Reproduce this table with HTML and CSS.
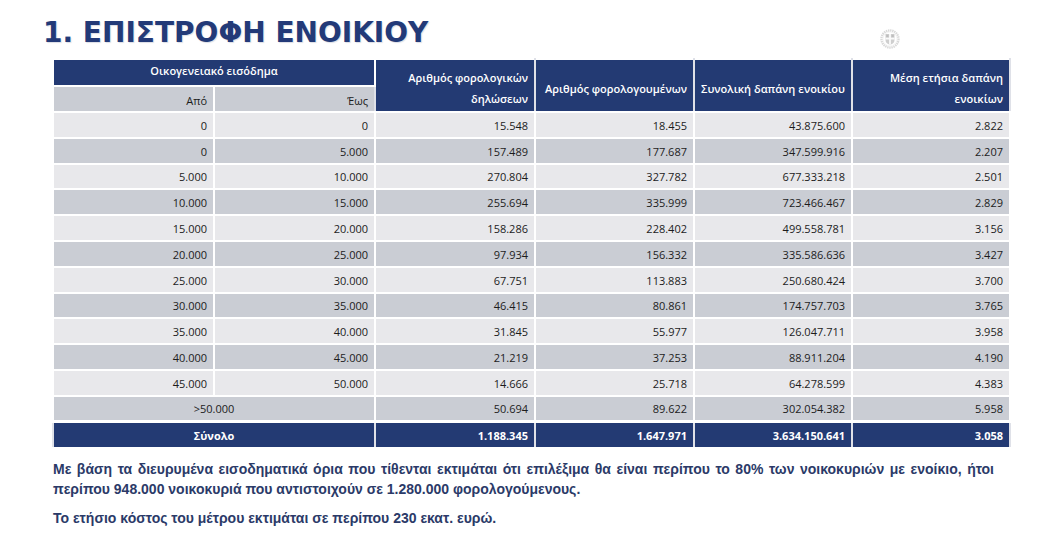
FILE: index.html
```html
<!DOCTYPE html>
<html lang="el">
<head>
<meta charset="utf-8">
<title>Επιστροφή ενοικίου</title>
<link rel="stylesheet" href="styles.css">
</head>
<body>
<div class="page">
  <div class="top">
    <h1 class="title">1. ΕΠΙΣΤΡΟΦΗ ΕΝΟΙΚΙΟΥ</h1>
    <svg class="emblem" viewBox="0 0 20 20" aria-hidden="true">
      <circle cx="10" cy="10" r="8.5" fill="none" stroke="#d9d9d9" stroke-width="2.4" stroke-dasharray="1.4 0.7"/>
      <circle cx="10" cy="10" r="7" fill="none" stroke="#ececec" stroke-width="0.6"/>
      <path d="M5.5 5 H14.5 V11 Q14.5 14.7 10 15.8 Q5.5 14.7 5.5 11 Z" fill="#cfcfcf"/>
      <rect x="9.1" y="5" width="1.8" height="10.6" fill="#fafafa"/>
      <rect x="5.5" y="8.7" width="9" height="1.8" fill="#fafafa"/>
      <rect x="6.3" y="5.8" width="2.1" height="2.2" fill="#bdbdbd"/>
      <rect x="11.6" y="5.8" width="2.1" height="2.2" fill="#bdbdbd"/>
    </svg>
  </div>

  <table class="data">
    <colgroup>
      <col class="c1"><col class="c2"><col class="c3"><col class="c4"><col class="c5"><col class="c6">
    </colgroup>
    <thead>
      <tr class="h1">
        <th colspan="2" class="group">Οικογενειακό εισόδημα</th>
        <th rowspan="2" class="hcol">Αριθμός φορολογικών<br>δηλώσεων</th>
        <th rowspan="2" class="hcol">Αριθμός φορολογουμένων</th>
        <th rowspan="2" class="hcol">Συνολική δαπάνη ενοικίου</th>
        <th rowspan="2" class="hcol">Μέση ετήσια δαπάνη<br>ενοικίων</th>
      </tr>
      <tr class="h2">
        <th class="sub">Από</th>
        <th class="sub">Έως</th>
      </tr>
    </thead>
    <tbody>
      <tr class="light"><td>0</td><td>0</td><td>15.548</td><td>18.455</td><td>43.875.600</td><td>2.822</td></tr>
      <tr class="dark"><td>0</td><td>5.000</td><td>157.489</td><td>177.687</td><td>347.599.916</td><td>2.207</td></tr>
      <tr class="light"><td>5.000</td><td>10.000</td><td>270.804</td><td>327.782</td><td>677.333.218</td><td>2.501</td></tr>
      <tr class="dark"><td>10.000</td><td>15.000</td><td>255.694</td><td>335.999</td><td>723.466.467</td><td>2.829</td></tr>
      <tr class="light"><td>15.000</td><td>20.000</td><td>158.286</td><td>228.402</td><td>499.558.781</td><td>3.156</td></tr>
      <tr class="dark"><td>20.000</td><td>25.000</td><td>97.934</td><td>156.332</td><td>335.586.636</td><td>3.427</td></tr>
      <tr class="light"><td>25.000</td><td>30.000</td><td>67.751</td><td>113.883</td><td>250.680.424</td><td>3.700</td></tr>
      <tr class="dark"><td>30.000</td><td>35.000</td><td>46.415</td><td>80.861</td><td>174.757.703</td><td>3.765</td></tr>
      <tr class="light"><td>35.000</td><td>40.000</td><td>31.845</td><td>55.977</td><td>126.047.711</td><td>3.958</td></tr>
      <tr class="dark"><td>40.000</td><td>45.000</td><td>21.219</td><td>37.253</td><td>88.911.204</td><td>4.190</td></tr>
      <tr class="light"><td>45.000</td><td>50.000</td><td>14.666</td><td>25.718</td><td>64.278.599</td><td>4.383</td></tr>
      <tr class="dark"><td colspan="2" class="center">&gt;50.000</td><td>50.694</td><td>89.622</td><td>302.054.382</td><td>5.958</td></tr>
    </tbody>
    <tfoot>
      <tr class="total"><td colspan="2" class="center">Σύνολο</td><td>1.188.345</td><td>1.647.971</td><td>3.634.150.641</td><td>3.058</td></tr>
    </tfoot>
  </table>

  <div class="notes">
    <p class="note">Με βάση τα διευρυμένα εισοδηματικά όρια που τίθενται εκτιμάται ότι επιλέξιμα θα είναι περίπου το 80% των νοικοκυριών με ενοίκιο, ήτοι περίπου 948.000 νοικοκυριά που αντιστοιχούν σε 1.280.000 φορολογούμενους.</p>
    <p class="note">Το ετήσιο κόστος του μέτρου εκτιμάται σε περίπου 230 εκατ. ευρώ.</p>
  </div>
</div>
</body>
</html>
```

FILE: styles.css
```css
html, body {
  margin: 0;
  padding: 0;
  background: #ffffff;
}

body {
  font-family: "Open Sans", "Noto Sans", sans-serif;
  color: #1c1c1c;
}

.page {
  width: 1050px;
  padding-top: 17px;
}

.top {
  display: flex;
  align-items: flex-start;
  width: 1009px;
}

.title {
  margin: 0 0 0 43px;
  font-family: "DejaVu Sans", "Liberation Sans", sans-serif;
  font-weight: bold;
  font-size: 28px;
  line-height: 32px;
  letter-spacing: 0;
  color: #233a78;
  text-shadow: 1px 1px 1px rgba(90, 100, 130, 0.22);
}

.emblem {
  display: block;
  width: 20px;
  height: 20px;
  margin-left: auto;
  margin-right: 109px;
  margin-top: 12px;
}

.data {
  margin: 9px 0 0 52px;
  width: 957px;
  table-layout: fixed;
  border-collapse: collapse;
  font-size: 11px;
}

.c1, .c2 { width: 161px; }
.c3 { width: 160px; }
.c4 { width: 159px; }
.c5, .c6 { width: 158px; }

.data th,
.data td {
  border: 2px solid #ffffff;
  padding: 0 6px 0 4px;
  text-align: right;
  white-space: nowrap;
  overflow: hidden;
}

.data .center,
.data .group {
  text-align: center;
  padding-left: 0;
  padding-right: 0;
}

.h1 { height: 26.5px; }
.h2 { height: 26.5px; }

.data .group {
  background: #233a73;
  color: #ffffff;
  font-weight: 600;
  vertical-align: middle;
  padding-bottom: 4px;
}

.data .hcol {
  background: #233a73;
  color: #ffffff;
  font-weight: 600;
  line-height: 21px;
  vertical-align: middle;
  padding-top: 5px;
  border-left-color: #dfe1e8;
  border-right-color: #dfe1e8;
}

.data .sub {
  background: #c9ccd3;
  color: #1c1c1c;
  font-weight: normal;
  vertical-align: middle;
  padding-top: 3px;
}

.data tbody tr { height: 25.8px; }

.data tbody td { vertical-align: middle; padding-top: 1px; }

.light td { background: #e8e8eb; }
.dark td { background: #cacdd4; }

.total { height: 26.4px; }

.data .total td {
  background: #233a73;
  color: #ffffff;
  font-weight: bold;
  vertical-align: middle;
  border-top-width: 3px;
  border-left-color: #dfe1e8;
  border-right-color: #dfe1e8;
}

.notes {
  margin: 10px 0 0 53px;
  width: 941px;
}

.note {
  margin: 0 0 9px 0;
  font-family: "Liberation Sans", Arial, sans-serif;
  font-weight: bold;
  font-size: 14px;
  line-height: 20px;
  color: #2b3a68;
  text-align: justify;
}
```
